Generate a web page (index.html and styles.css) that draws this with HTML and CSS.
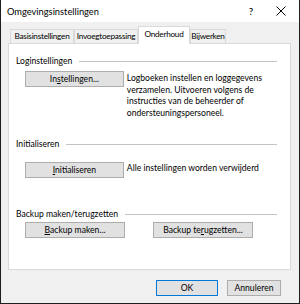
FILE: index.html
```html
<!DOCTYPE html>
<html lang="nl">

<head>
  <meta charset="UTF-8">
  <title>Omgevingsinstellingen</title>
  <link rel="stylesheet" href="styles.css">
</head>

<body>
  <div class="window">
    <div class="titlebar">
      <span class="title">Omgevingsinstellingen</span>
      <span class="help">?</span>
      <span class="close">
        <svg width="10" height="10" viewBox="0 0 10 10"><path d="M0.5 0.5L9.5 9.5M9.5 0.5L0.5 9.5" stroke="#000" stroke-width="1" fill="none"/></svg>
      </span>
    </div>

    <div class="client">
      <div class="tabs">
        <div class="tab tab-basis">Basisinstellingen</div>
        <div class="tab tab-plugin">Invoegtoepassing</div>
        <div class="tab tab-onderhoud active">Onderhoud</div>
        <div class="tab tab-update">Bijwerken</div>
      </div>

      <div class="panel">
        <div class="section first">
          <div class="header"><span class="label">Loginstellingen</span><span class="rule"></span></div>
          <div class="row">
            <button class="btn">In<u>s</u>tellingen...</button>
            <p class="desc">Logboeken instellen en loggegevens verzamelen. Uitvoeren volgens de instructies van de beheerder of ondersteuningspersoneel.</p>
          </div>
        </div>

        <div class="section second">
          <div class="header"><span class="label">Initialiseren</span><span class="rule"></span></div>
          <div class="row">
            <button class="btn"><u>I</u>nitialiseren</button>
            <p class="desc">Alle instellingen worden verwijderd</p>
          </div>
        </div>

        <div class="section third">
          <div class="header"><span class="label">Backup maken/terugzetten</span><span class="rule"></span></div>
          <div class="row">
            <button class="btn"><u>B</u>ackup maken...</button>
            <button class="btn restore">Backup te<u>r</u>ugzetten...</button>
          </div>
        </div>
      </div>

      <div class="footer">
        <button class="btn ok">OK</button>
        <button class="btn cancel">Annuleren</button>
      </div>
    </div>
  </div>
</body>

</html>
```

FILE: styles.css
```css
body {
  margin: 0;
  font-family: Lato, 'Noto Sans', sans-serif;
  font-size: 8.6px;
  color: #000;
}

.window {
  width: 300px;
  height: 304px;
  box-sizing: border-box;
  border: 1px solid #1e1e1e;
  border-top: none;
  display: flex;
  flex-direction: column;
}

.titlebar {
  height: 22px;
  background: #fff;
  display: flex;
  align-items: center;
  padding-left: 6px;
}

.title {
  flex: 1;
  font-size: 9.3px;
}

.help {
  width: 20px;
  font-size: 10px;
  margin-right: 10px;
  text-align: center;
}

.close {
  width: 20px;
  margin-right: 8px;
  display: flex;
  justify-content: center;
}

.client {
  flex: 1;
  background: #f0f0f0;
  padding: 4px 8px 0 7px;
  display: flex;
  flex-direction: column;
}

.tabs {
  display: flex;
  height: 17px;
  padding-left: 2px;
  align-items: flex-end;
}

.tab {
  box-sizing: border-box;
  height: 14px;
  line-height: 13px;
  font-size: 8.2px;
  letter-spacing: -0.25px;
  text-align: center;
  white-space: nowrap;
  border: 1px solid #d9d9d9;
  border-bottom: none;
  background: #f0f0f0;
}

.tab-basis,
.tab-plugin {
  width: 64px;
}

.tab-onderhoud {
  width: 52px;
}

.tab-update {
  width: 36px;
}

.tab.active {
  line-height: 15px;
  background: #fff;
  position: relative;
  z-index: 1;
  height: 18px;
  margin-bottom: -1px;
}

.panel {
  height: 227px;
  box-sizing: border-box;
  background: #fff;
  border: 1px solid #d9d9d9;
  padding: 11px 13px 0 7px;
}

.header {
  display: flex;
  align-items: center;
  height: 12px;
}

.rule {
  flex: 1;
  height: 1px;
  background: #c4c4c4;
  margin-left: 7px;
}

.row {
  display: flex;
  align-items: flex-start;
  padding-left: 9px;
}

.btn {
  font: inherit;
  color: #000;
  width: 100px;
  height: 16px;
  padding: 0;
  background: #e1e1e1;
  border: 1px solid #adadad;
  border-radius: 0;
}

.desc {
  margin: 2px 0 0 3px;
  line-height: 11.5px;
  width: 152px;
}

.first .row {
  margin-top: 4px;
}

.second {
  margin-top: 19px;
}

.second .row {
  margin-top: 12px;
}

.second .desc {
  margin-top: 1px;
}

.third {
  margin-top: 30px;
}

.third .row {
  margin-top: 2px;
}

.restore {
  margin-left: 28px;
}

.footer {
  flex: 1;
  display: flex;
  align-items: center;
  justify-content: flex-end;
  padding: 2px 10px 0 0;
  gap: 9px;
}

.ok {
  width: 62px;
  border-color: #0078d7;
}

.cancel {
  width: 54px;
}
```
